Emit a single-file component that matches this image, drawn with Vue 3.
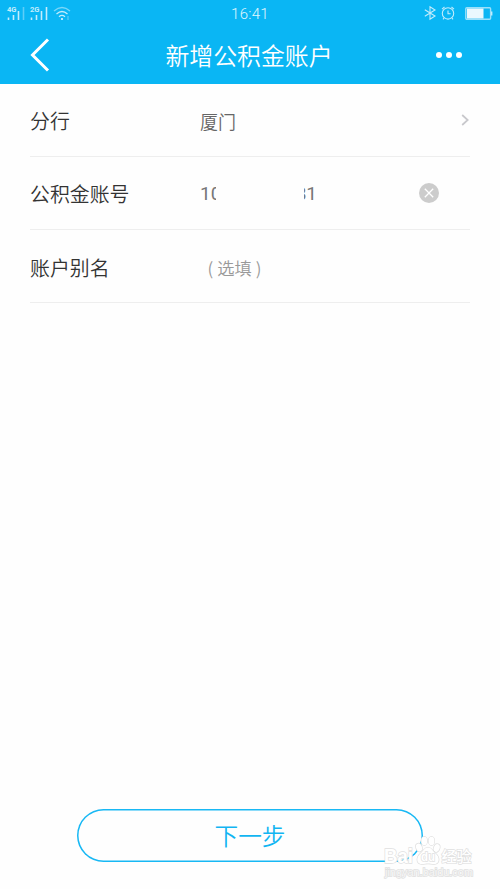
<script setup>
const signals = ['4G', '2G']
</script>

<template>
  <main class="screen">
    <header class="top">
      <div class="status">
        <div class="status-left">
          <svg v-for="(net, i) in signals" :key="net" class="signal" viewBox="0 0 18 15">
            <text x="0" y="6.3" textLength="9.5" lengthAdjust="spacingAndGlyphs">{{ net }}</text>
            <path d="M1.5 11.500v2.500M6.5 9v5" />
            <path d="M11.5 5v9" />
            <path d="M16.5 1v13" :opacity="i === 0 ? 0.45 : 1" />
          </svg>
          <svg class="wifi" viewBox="0 0 18 15">
            <path d="M1 5Q9-2 17 5" opacity=".6" />
            <path d="M3.5 8Q9 3 14.5 8M6 10.7Q9 8.2 12 10.7" />
            <circle cx="9" cy="13" r="1.1" />
            <path d="M15 10v4" opacity=".4" />
          </svg>
        </div>
        <time class="clock">16:41</time>
        <div class="status-right">
          <svg class="bluetooth" viewBox="0 0 12 14">
            <path d="M.8 3.8 11 10 6 13.2V.8L11 4 .8 10.2" />
          </svg>
          <svg class="alarm" viewBox="0 0 14 14">
            <circle cx="7" cy="7.4" r="5.7" />
            <path d="M7 4.5v3.2h2.6M1 3.2 3.5 1M10.5 1 13 3.2M3 12 2 13.3M11 12l1 1.3" />
          </svg>
          <svg class="battery" viewBox="0 0 28 13">
            <rect class="shell" x=".8" y=".8" width="24.8" height="11.4" rx="1" />
            <rect class="charge" x="2" y="1.500" width="16.500" height="10" />
            <path d="M26.7 4.5v4" />
          </svg>
        </div>
      </div>
      <nav class="nav">
        <svg class="back" viewBox="0 0 20 34"><path d="M18 1.5 2.5 17 18 32.5" /></svg>
        <h1>新增公积金账户</h1>
        <svg class="more" viewBox="0 0 28 8">
          <circle cx="4" cy="4" r="3" /><circle cx="14" cy="4" r="3" /><circle cx="24" cy="4" r="3" />
        </svg>
      </nav>
    </header>

    <section class="form">
      <div class="row">
        <span class="label">分行</span>
        <span class="value">厦门</span>
        <svg class="chevron" viewBox="0 0 8 12"><path d="M1.2 1 6.7 6 1.2 11" /></svg>
      </div>
      <div class="row">
        <span class="label">公积金账号</span>
        <span class="value account">
          <span class="digits head"><span>10</span></span>
          <span class="digits tail"><span>81</span></span>
        </span>
        <svg class="clear" viewBox="0 0 20 20">
          <circle cx="10" cy="10" r="10" /><path d="m5.8 5.8 8.4 8.4m0-8.4-8.4 8.4" />
        </svg>
      </div>
      <div class="row">
        <span class="label">账户别名</span>
        <span class="value placeholder"><span>(</span><span>选填</span><span>)</span></span>
      </div>
    </section>

    <footer class="bottom">
      <button class="next">下一步</button>
    </footer>

    <svg class="watermark" viewBox="0 0 94 50">
      <g class="mark">
        <text x="3" y="31" class="brand" textLength="29" lengthAdjust="spacingAndGlyphs">Bai</text>
        <ellipse cx="38" cy="15.500" rx="2.900" ry="4" transform="rotate(-20 38 15.500)" />
        <ellipse cx="43.300" cy="8.900" rx="2.900" ry="4.200" />
        <ellipse cx="50.500" cy="8.900" rx="2.900" ry="4.200" />
        <ellipse cx="55.700" cy="16" rx="2.900" ry="4" transform="rotate(20 55.700 16)" />
        <path d="M47 15.500c-3.500 0-4.500 3.500-7.500 6-4.500 3.700-4 9.500 0 10.400 2.800.6 4.700-.4 7.500-.4s4.700 1 7.500.4c4-.9 4.500-6.700 0-10.400-3-2.500-4-6-7.500-6Z" />
        <text x="40" y="29.300" class="du" textLength="14" lengthAdjust="spacingAndGlyphs">du</text>
        <text x="60.500" y="30" class="cn" textLength="30" lengthAdjust="spacingAndGlyphs">经验</text>
        <text x="4" y="43.700" class="site" textLength="88" lengthAdjust="spacingAndGlyphs">jingyan.baidu.com</text>
      </g>
    </svg>
  </main>
</template>

<style>
body {
  margin: 0;
  background: #fefefe;
}
</style>

<style scoped>
.screen {
  position: relative;
  display: flex;
  flex-direction: column;
  width: 500px;
  height: 889px;
  overflow: hidden;
  background: #fefefe;
  font-family: "Noto Sans CJK SC", sans-serif;
  font-weight: 350;
}
svg {
  display: block;
  fill: none;
  overflow: visible;
}
.top {
  height: 83.5px;
  flex: none;
  background: #0ab6f4;
  color: #fff;
}
.status {
  display: grid;
  grid-template-columns: 1fr auto 1fr;
  align-items: center;
  height: 26px;
  padding: 0 7px;
  stroke: #c3ecfc;
}
.status-left,
.status-right {
  display: flex;
  align-items: center;
}
.status-left {
  gap: 5px;
  padding-bottom: 1px;
}
.status-right {
  justify-content: flex-end;
  padding-bottom: 1px;
}
.signal {
  width: 18px;
  height: 15px;
  stroke-width: 1.6;
}
.signal text {
  font: 700 7px Roboto, sans-serif;
  fill: #c3ecfc;
  stroke: none;
}
.wifi {
  width: 18px;
  height: 15px;
  stroke-width: 1.3;
}
.wifi circle {
  fill: #e3f6fe;
  stroke: none;
}
.clock {
  font: 300 15px/26px Roboto, sans-serif;
  letter-spacing: .3px;
  color: #e0f6fe;
  padding-top: 1px;
}
.bluetooth {
  width: 12px;
  height: 14px;
  stroke-width: 1.1;
}
.alarm {
  width: 14px;
  height: 14px;
  margin: 0 10px 0 5px;
  stroke-width: 1.1;
}
.battery {
  width: 28px;
  height: 13px;
  stroke-width: 1.4;
}
.shell {
  stroke: #9be0fa;
}
.charge {
  fill: #eaf8fe;
  stroke: none;
}
.nav {
  display: grid;
  grid-template-columns: 1fr auto 1fr;
  align-items: center;
  height: 57px;
  padding: 0 37px;
}
.back {
  width: 20px;
  height: 34px;
  margin-left: -7px;
  stroke: #fff;
  stroke-width: 3;
}
h1 {
  margin: 0 1px 0 -1px;
  font-size: 23.900px;
  line-height: 57px;
  font-weight: 350;
}
.more {
  width: 28px;
  height: 8px;
  justify-self: end;
  fill: #fff;
}
.form {
  padding: 0 30px;
}
.row {
  box-sizing: border-box;
  display: flex;
  align-items: center;
  height: 73.300px;
  border-bottom: 1px solid #eee;
}
.label {
  width: 170px;
  padding-top: 2px;
  font-size: 19.900px;
  color: #333;
}
.value {
  flex: 1;
  padding-top: 2px;
  font-size: 18px;
  color: #666;
}
.placeholder {
  display: flex;
  gap: 4px;
  padding-left: 7.500px;
  font-size: 17.300px;
  color: #999;
}
.account {
  display: flex;
  font: 400 19px/26px Roboto, sans-serif;
  color: #777;
}
.digits {
  display: flex;
  overflow: hidden;
}
.head {
  width: 15.500px;
}
.tail {
  width: 13.500px;
  margin-left: 88px;
  justify-content: flex-end;
}
.chevron {
  width: 8px;
  height: 12px;
  margin-right: 1px;
  stroke: #c8c8cc;
  stroke-width: 1.700;
}
.clear {
  width: 20px;
  height: 20px;
  margin-right: 31px;
  stroke: #fff;
  stroke-width: 1.300;
}
.clear circle {
  fill: #ccc;
  stroke: none;
}
.bottom {
  margin-top: auto;
  padding: 0 77px 27px;
}
.next {
  box-sizing: border-box;
  display: block;
  width: 346px;
  height: 53px;
  padding: 0;
  border: none;
  box-shadow: inset 0 0 0 1.500px #18b8f4;
  border-radius: 27px;
  background: transparent;
  color: #12b5f2;
  font: 350 23.700px/53px "Noto Sans CJK SC", sans-serif;
}
.watermark {
  position: absolute;
  left: 381px;
  top: 832px;
  width: 94px;
  height: 50px;
}
.mark {
  fill: #fff;
  stroke: #e0e0e0;
  stroke-width: 1.400;
  paint-order: stroke;
}
.brand {
  font: 700 20px "Liberation Sans", sans-serif;
}
.du {
  font: 700 12px "Liberation Sans", sans-serif;
}
.cn {
  font: 500 15px/1 "Noto Sans CJK SC", sans-serif;
}
.site {
  font: 400 10px/1 "Liberation Sans", sans-serif;
  fill: #f6f6f6;
}
</style>
